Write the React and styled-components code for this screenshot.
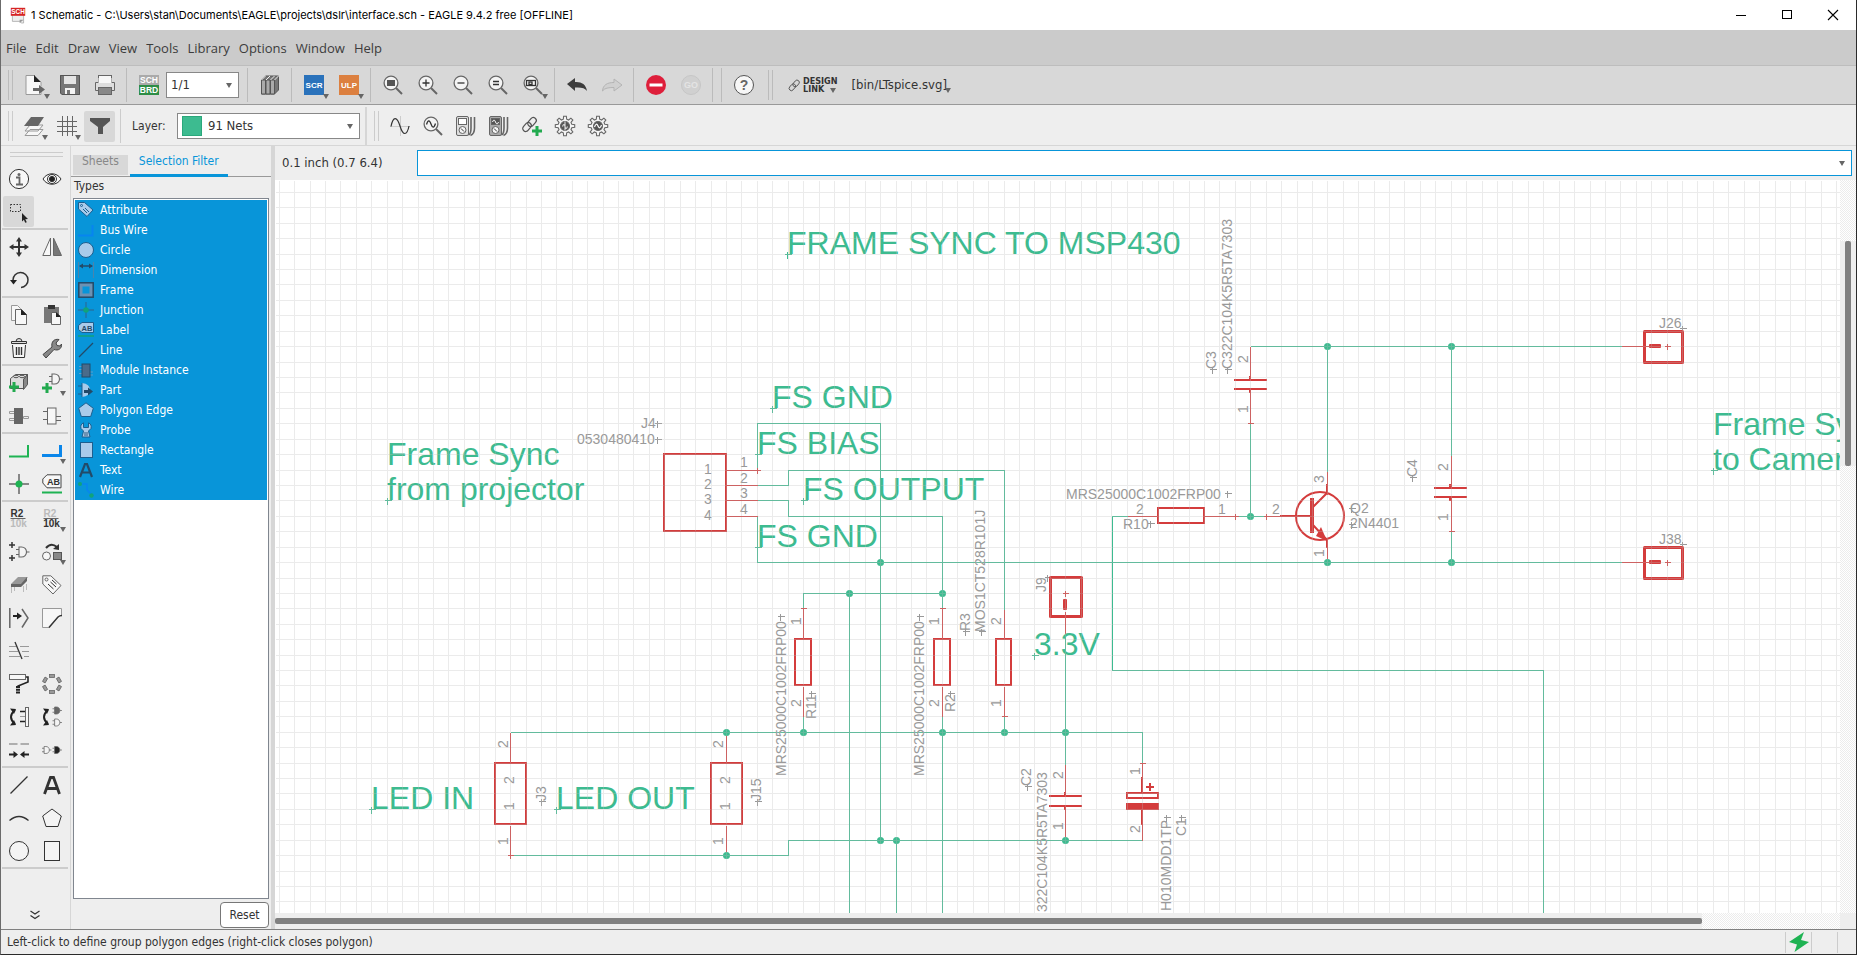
import React from 'react';
import styled, { createGlobalStyle, css } from 'styled-components';

const color = {
  accent: '#0895d9',
  net: '#3dbb90',
  symbol: '#d43c3c',
  label: '#999999',
  panel: '#eeeeee',
  bar: '#d8d8d8',
  line: '#d6d6d6',
  ink: '#333333',
};
const uiFont = '"DejaVu Sans Condensed", "DejaVu Sans", sans-serif';

const GlobalStyle = createGlobalStyle`
  *, *::before, *::after { box-sizing: border-box; }
  body { margin: 0; background: ${color.panel}; }
  button, input, select { font: inherit; color: inherit; margin: 0; }
`;

/* ---------- window frame ---------- */

const Window = styled.div`
  display: flex;
  flex-direction: column;
  min-height: 100vh;
  border: solid #2b2b2b;
  border-width: 0 1px 1px 1px;
  border-left-color: #6b6b6b;
  background: ${color.panel};
  color: ${color.ink};
  font: 12px/16px ${uiFont};
`;
const TitleBar = styled.header`
  display: flex;
  align-items: center;
  height: 30px;
  padding-left: 9px;
  background: #fff;
  color: #000;
`;
const Title = styled.h1`
  flex: 1;
  margin: 0 0 0 5px;
  font: 11px/16px Inter, sans-serif;
  white-space: nowrap;
`;
const WindowButton = styled.button`
  display: grid;
  place-items: center;
  width: 46px;
  height: 30px;
  padding: 0;
  border: 0;
  background: none;
`;
const MenuBar = styled.nav`
  display: flex;
  align-items: center;
  height: 36px;
  padding-left: 1px;
  border-bottom: 1px solid #bdbdbd;
  background: #cbcbcb;
`;
const MenuButton = styled.button`
  padding: 0 5px 0 4px;
  border: 0;
  background: none;
  color: #3c3c3c;
  font: 13px/20px "Open Sans", sans-serif;
`;

/* ---------- toolbars ---------- */

const Toolbar = styled.div`
  display: flex;
  align-items: center;
  ${(p) => p.$main
    ? css`height: 39px; background: ${color.bar}; border-bottom: 1px solid #999;`
    : css`height: 41px; background: ${color.panel}; border-bottom: 1px solid ${color.line}; padding-top: 2px;`}
`;
const Handle = styled.span`
  width: 5px;
  height: 30px;
  margin: 0 4px 0 7px;
  border: solid ${(p) => (p.$main ? '#bbb' : '#ccc')};
  border-width: 0 1px;
`;
const Divider = styled.span`
  width: 1px;
  height: 34px;
  margin: 0 4px;
  background: ${(p) => (p.$light ? '#ccc' : '#bbb')};
`;
const Gap = styled.span`
  width: 2px;
  align-self: stretch;
  margin-left: 5px;
  background: ${color.line};
`;
const ToolButton = styled.button`
  position: relative;
  display: grid;
  place-items: center;
  width: ${(p) => p.$width || 33}px;
  height: 33px;
  padding: 0;
  border: 0;
  background: none;
  &::before {
    content: '';
    position: absolute;
    inset: 1px;
    border-radius: 2px;
    background: ${(p) => (p.$active ? color.bar : 'transparent')};
  }
`;
const TextTool = styled.button`
  position: relative;
  display: flex;
  align-items: center;
  gap: 3px;
  height: 34px;
  margin-left: ${(p) => (p.$small ? 11 : 14)}px;
  padding: 0;
  border: 0;
  background: none;
  font-size: ${(p) => (p.$small ? '9px' : '13px')};
  font-weight: ${(p) => (p.$small ? 700 : 400)};
  line-height: ${(p) => (p.$small ? '8px' : '16px')};
  text-align: left;
`;
const Caret = styled.span`
  position: absolute;
  right: ${(p) => (p.$edge ? -4 : 2)}px;
  bottom: ${(p) => p.$drop || 3}px;
  border: solid transparent;
  border-width: 5px 3px 0;
  border-top-color: #666;
`;
const Combo = styled.span`
  position: relative;
  display: flex;
  align-items: center;
  width: ${(p) => p.$width}px;
  height: 26px;
  padding-left: 4px;
  border: 1px solid #888;
  background: #fff;
  font-size: 13px;
`;
const SheetCombo = styled(Combo)`
  margin-right: 4px;
`;
const ComboSelect = styled.select`
  flex: 1;
  align-self: stretch;
  min-width: 0;
  padding: 0;
  border: 0;
  outline: 0;
  appearance: none;
  background: transparent;
`;
const ComboArrow = styled.span`
  position: absolute;
  right: 6px;
  top: 10px;
  border: solid transparent;
  border-width: 5px 3px 0;
  border-top-color: #666;
  pointer-events: none;
`;
const Swatch = styled.span`
  width: 20px;
  height: 20px;
  margin-right: 6px;
  border: 1px solid #2aa87b;
  background: ${color.net};
`;
const LayerLabel = styled.label`
  width: 45px;
  margin-left: 7px;
`;

/* ---------- body ---------- */

const Body = styled.div`
  display: flex;
  flex: 1;
`;
const Palette = styled.aside`
  display: flex;
  flex-direction: column;
  align-items: stretch;
  width: 70px;
  padding: 6px 2px 0 1px;
  border-right: 1px solid ${color.line};
`;
const PaletteHandle = styled.span`
  height: 5px;
  margin: 0 5px 5px 8px;
  border: solid #ccc;
  border-width: 1px 0;
`;
const PaletteGroup = styled.div`
  display: grid;
  grid-template-columns: 33px 33px;
  border-bottom: 2px solid #ccc;
`;
const MoreButton = styled.button`
  display: grid;
  place-items: center;
  height: 28px;
  margin-top: auto;
  padding: 0;
  border: 0;
  background: none;
`;
const Dock = styled.section`
  display: flex;
  flex-direction: column;
  width: 200px;
  padding: 9px 0 1px;
`;
const Tabs = styled.div`
  display: flex;
  gap: 2px;
  height: 22px;
  padding-left: 2px;
  border-bottom: 1px solid #999;
`;
const Tab = styled.button`
  height: ${(p) => (p.$active ? 22 : 20)}px;
  padding: 0 9px 8px;
  border: 0;
  background: ${(p) => (p.$active ? 'none' : color.bar)};
  border-bottom: ${(p) => (p.$active ? `3px solid ${color.accent}` : '0')};
  color: ${(p) => (p.$active ? color.accent : '#888')};
  line-height: 12px;
  white-space: nowrap;
`;
const DockTitle = styled.h2`
  margin: 1px 0 4px 3px;
  font: inherit;
`;
const TypeList = styled.ul`
  flex: 1;
  margin: 0 2px 3px;
  padding: 1px;
  border: 1px solid #80868f;
  background: #fff;
  list-style: none;
`;
const TypeItem = styled.li`
  display: flex;
  align-items: center;
  gap: 6px;
  height: 20px;
  padding-left: 3px;
  background: ${color.accent};
  color: #fff;
`;
const ResetButton = styled.button`
  align-self: flex-end;
  width: 49px;
  height: 26px;
  margin-right: 2px;
  padding: 0;
  border: 1px solid #777;
  border-radius: 4px;
  background: #fff;
`;
const Splitter = styled.div`
  width: 4px;
  background: ${color.line};
`;
const Editor = styled.main`
  display: flex;
  flex: 1;
  flex-direction: column;
  min-width: 0;
`;
const CommandRow = styled.div`
  display: flex;
  align-items: center;
  height: 34px;
  padding: 0 4px 0 7px;
`;
const Coordinates = styled.output`
  width: 135px;
  font-size: 13px;
`;
const CommandBox = styled.span`
  position: relative;
  display: flex;
  flex: 1;
  height: 26px;
  border: 1px solid ${color.accent};
  background: #fff;
`;
const CommandInput = styled.input`
  flex: 1;
  min-width: 0;
  padding: 0 16px 0 4px;
  border: 0;
  outline: 0;
  background: transparent;
`;
const CanvasArea = styled.div`
  display: grid;
  flex: 1;
  grid-template: 1fr 16px / 1fr 16px;
`;
const CanvasFrame = styled.div`
  position: relative;
  overflow: hidden;
  background: #fff;
`;
const Drawing = styled.svg`
  position: absolute;
  inset: 0;
  width: 100%;
  height: 100%;
  font-family: "Liberation Sans", Arial, sans-serif;
`;
const dither = 'repeating-conic-gradient(#fff 0 25%, #ececec 0 50%) 0 0 / 2px 2px';
const ScrollTrack = styled.div`
  display: flex;
  flex-direction: ${(p) => (p.$vertical ? 'column' : 'row')};
  background: ${dither};
`;
const ScrollSpace = styled.span`
  flex: ${(p) => p.$share} 0 0;
`;
const ScrollThumb = styled.span`
  flex: ${(p) => p.$share} 0 0;
  padding: ${(p) => (p.$vertical ? '0 5px' : '5px 0')};
  background: ${color.panel};
  &::before {
    content: '';
    display: block;
    height: 100%;
    border-radius: 2px;
    background: #808080;
  }
`;
const StatusBar = styled.footer`
  display: flex;
  align-items: center;
  height: 25px;
  padding-left: 6px;
  border-top: 1px solid #808080;
`;
const StatusText = styled.span`
  flex: 1;
`;
const StatusCell = styled.span`
  display: grid;
  place-items: center;
  width: ${(p) => p.$width}px;
  height: 21px;
  border-left: 1px solid #ccc;
`;

/* ---------- icons ---------- */

const IconSvg = styled.svg`
  position: relative;
  display: block;
  flex: none;
  overflow: visible;
  font-family: "Liberation Sans", Arial, sans-serif;
  font-weight: 700;
`;
const D = '#333';
const M = '#666';
const G = '#999';

const gear = (() => {
  const pts = [];
  for (let i = 0; i < 8; i += 1) {
    [[-14, 7], [-8, 9.8], [8, 9.8], [14, 7]].forEach(([a, r]) => {
      const t = ((i * 45 + a) * Math.PI) / 180;
      pts.push(`${(10 + r * Math.cos(t)).toFixed(2)},${(10 + r * Math.sin(t)).toFixed(2)}`);
    });
  }
  return pts.join(' ');
})();

const Lens = ({ children }) => (
  <g fill="none" stroke={M} strokeWidth="1.3">
    <circle cx="8" cy="8" r="6.9" fill="#f4f4f4" />
    <path d="M13 13l6 6" strokeWidth="2" />
    <g stroke={D}>{children}</g>
  </g>
);
const Plus = ({ x, y, c = '#22aa4f', s = 5, w = 3 }) => (
  <path d={`M${x - s} ${y}h${2 * s}M${x} ${y - s}v${2 * s}`} stroke={c} strokeWidth={w} fill="none" />
);
const Chain = () => (
  <g fill="none" stroke="#555" strokeWidth="1.2">
    <rect x="5" y="3" width="10" height="6" rx="3" transform="rotate(-50 10 6)" />
    <rect x="0" y="8" width="10" height="6" rx="3" transform="rotate(-50 5 11)" />
  </g>
);
const Gate = ({ x = 0, y = 0, fill = '#f4f4f4' }) => (
  <g transform={`translate(${x} ${y})`} stroke={M} strokeWidth="1.1" fill={fill}>
    <path d="M3 0h2.500c3 0 5 2 5 5s-2 5-5 5h-2.500zM0 2.500h3M0 7.500h3M10.500 5h3" />
  </g>
);
const Meter = ({ dark }) => (
  <g stroke={M} fill="#f4f4f4">
    <rect x="0.500" y="0.500" width="12" height="19" rx="1.500" fill={dark ? '#aaa' : '#ddd'} />
    <rect x="2.500" y="2.500" width="8" height="6" fill={dark ? '#555' : '#fff'} />
    {dark && <path d="M3.500 6q1.500-4 3 0t3 0" fill="none" stroke="#fff" />}
    <circle cx="6.500" cy="14" r="3.500" />
    <path d="M5 12.500l3 3" stroke={D} />
    <path d="M15 1v11q0 6-2.500 7M18.500 1v11q0 6-4 7.500" fill="none" strokeWidth="1.600" />
  </g>
);
const GearIcon = ({ dark }) => (
  <g fill="#f4f4f4" stroke={M} strokeWidth="1.100">
    <polygon points={gear} />
    <circle cx="10" cy="10" r="4.500" fill="#555" />
    {dark
      ? <path d="M6.500 11q1.800-5 3.500-1t3.500-1" fill="none" stroke="#fff" strokeWidth="1.200" />
      : <path d="M10 5.500v9M7.500 10.500q1.500-4 2.500 0t2.500 0" fill="none" stroke="#ddd" strokeWidth="1.100" />}
  </g>
);
const Tile = ({ text, fill }) => (
  <g>
    <rect width="20" height="20" fill={fill} />
    <text x="10" y="13" textAnchor="middle" fontSize="8" fill="#fff">{text}</text>
  </g>
);
const NamePair = ({ top, bottom }) => (
  <g fontSize="10" textAnchor="middle">
    <text x="8" y="8" fill={top}>R2</text>
    <path d="M1.500 9.500h15" stroke={M} />
    <text x="9.500" y="18" fill={bottom}>10k</text>
  </g>
);

const glyphs = {
  doc: <g><path d="M1 .5h9l6 6v13H1z" fill="#f7f7f7" /><path d="M1 19.500V.5h9" fill="none" stroke={G} /><path d="M9 0l7 7H9z" fill="#222" /><path d="M1 19.500h15V17M16 7v4" fill="none" stroke={G} /><path d="M8 14.500h7" stroke={M} strokeWidth="3" /><path d="M14 10l6 4.500-6 4.500z" fill={M} /></g>,
  save: <g><path d="M0 0h20v20H2l-2-2z" fill="#777" /><path d="M4 0h12v9H4z" fill="#e4e4e4" /><path d="M5 13h10v7H5z" fill="#f4f4f4" /><path d="M7 15h3v5H7z" fill="#777" /><path d="M.5.5h19v19H2l-1.500-1.500z" fill="none" stroke="#555" /></g>,
  print: <g stroke={M}><rect x="3.500" y=".5" width="13" height="8" fill="#f7f7f7" /><path d="M.5 7.500h19v8H.5z" fill="#ddd" /><path d="M3.500 3v5h13V3" fill="#f7f7f7" stroke="none" /><rect x="3.500" y="12.500" width="13" height="7" fill="#888" /></g>,
  schbrd: <g fontSize="8.500" textAnchor="middle" fill="#fff"><rect width="20" height="10" fill="#aaa" /><rect y="10" width="20" height="10" fill="#2d8d46" /><text x="10" y="8">SCH</text><text x="10" y="18">BRD</text></g>,
  books: <g stroke="#555" fill="#aaa"><path d="M1.500 5l4-4h13v14l-4 4h-13z" fill="#777" /><path d="M1.500 5h4v14h-4zM6 5h4v14H6zM10.500 5h4v14h-4z" /><path d="M1.500 5l4-4M6 5l4-4M10.500 5l4-4M14.500 5l4-4" stroke="#eee" /></g>,
  scr: <Tile text="SCR" fill="#2a72bb" />,
  ulp: <Tile text="ULP" fill="#dc8040" />,
  zfit: <Lens><rect x="4" y="5" width="8" height="6" fill="#555" stroke="none" /></Lens>,
  zin: <Lens><path d="M4.500 8h7M8 4.500v7" /></Lens>,
  zout: <Lens><path d="M4.500 8h7" /></Lens>,
  zeq: <Lens><path d="M5 6.500h6M5 9.500h6" /></Lens>,
  zsel: <Lens><rect x="3.500" y="5.500" width="9" height="5" /><rect x="6" y="7" width="3" height="2.500" /></Lens>,
  zsine: <Lens><path d="M3.500 8.500q2.300-7 4.500-.5t4.500-.5" /></Lens>,
  undo: <path d="M0 9l8-6v4c6-.5 11 2 12 9-2-3-6-4-12-3.500V16z" fill="#3c3c3c" />,
  redo: <path d="M20 10l-8-6v3.500C5 7.500 1 10 .5 16c2-3 6-3.500 11.500-3.500V16z" fill="#d0d0d0" stroke="#b4b4b4" />,
  stop: <g><circle cx="10" cy="10" r="10" fill="#de1f3b" /><rect x="3.500" y="8.500" width="13" height="3" fill="#fff" /></g>,
  go: <g><circle cx="10" cy="10" r="9.500" fill="#d0d0d0" stroke="#c6c6c6" /><text x="10" y="13" textAnchor="middle" fontSize="9" fill="#e4e4e4">GO</text></g>,
  help: <g><circle cx="10" cy="10" r="9.500" fill="#f7f7f7" stroke="#555" /><text x="10" y="15" textAnchor="middle" fontSize="14" fill={M}>?</text></g>,
  chain: <g transform="translate(1 0) scale(1.250)"><Chain /></g>,
  layers: <g><path d="M1 19.500l5-6h13l-5 6zM1 15l5-6h13l-5 6z" fill="#f7f7f7" stroke={G} /><path d="M0 10L7 1h13l-6 9z" fill={M} /></g>,
  grid: <path d="M5.500 0v20M10.500 0v20M15.500 0v20M0 5.500h20M0 10.500h20M0 15.500h20" stroke={M} fill="none" />,
  funnel: <path d="M0 2h20v3l-7 6v7H8v-7L0 5z" fill="#555" />,
  sine: <g fill="none"><path d="M0 10.500h20M10.500 0v20" stroke="#ccc" /><path d="M1 10.500C3 0 7 0 10 10s7 10 9 0" stroke={D} strokeWidth="1.200" /></g>,
  meter: <Meter />,
  meterDark: <Meter dark />,
  chainPlus: <g><Chain /><Plus x={15} y={15} /></g>,
  gear: <GearIcon />,
  gearDark: <GearIcon dark />,
  info: <g><circle cx="10" cy="10" r="9.600" fill="#f7f7f7" stroke={D} /><circle cx="10" cy="5.500" r="1.500" fill={M} /><path d="M7 8.500h3.500v7M7 15.500h7" fill="none" stroke={M} strokeWidth="1.800" /></g>,
  eye: <g fill="none" stroke={D}><path d="M1 10c4-7 14-7 18 0-4 7-14 7-18 0z" fill="#f7f7f7" /><circle cx="10" cy="10" r="4.500" /><circle cx="10" cy="10" r="2.600" fill="#222" /></g>,
  select: <g><rect x="1.500" y="2.500" width="10" height="7" fill="none" stroke={D} strokeDasharray="1.500 1.500" /><path d="M13 11l6 6-2.700.2 1.500 3-1.600.6-1.300-3L13 19.500z" fill="#222" /></g>,
  move: <g fill={D}><path d="M9 4h2v5h5v2h-5v5H9v-5H4V9h5z" /><path d="M10 0l3 4.500H7zM10 20l3-4.500H7zM0 10l4.500-3v6zM20 10l-4.500-3v6z" /></g>,
  mirror: <g stroke={M}><path d="M.8 18.500h7.700V1z" fill="#f7f7f7" /><path d="M11.500 1v17.500h8z" fill="#777" /></g>,
  rotate: <g><path d="M4 10a7.500 7.500 0 1 1 8 7.500" fill="none" stroke={D} strokeWidth="1.500" /><path d="M1 10h7l-3.500 4.500z" fill="#222" /></g>,
  copy: <g stroke={M} fill="#f7f7f7"><path d="M2.500.5h6l3 3v12h-9z" stroke={G} /><path d="M6.500 4.500h6l5 5v10h-11z" /><path d="M12 4v6h6z" fill="#222" stroke="none" /></g>,
  paste: <g><path d="M2 2h15v16H2z" fill="#777" /><rect x="6" y="0" width="7" height="4" fill={D} /><path d="M9.500 7.500h5l4 4v8h-9z" fill="#f7f7f7" stroke={M} /><path d="M14 7v5h5z" fill="#222" /></g>,
  trash: <g fill="none" stroke={D}><path d="M2.500 3.500h15v2h-15zM7 3.500q0-3 3-3t3 3" fill="#ddd" /><path d="M3.500 7l1 12.500h11l1-12.500" fill="#f7f7f7" /><path d="M7.500 9v8M10 9v8M12.500 9v8" strokeWidth="1.400" /></g>,
  wrench: <path d="M1 16.500L10 9C9 4 12 .5 17 1.500L14 5l1 2.500 3 .5 1.500-2C20 11 16 13 12 11.500L4 20z" fill="#888" stroke="#444" />,
  addModule: <g stroke="#555" fill="#ddd"><path d="M1.500 5.500l5-4h12l-4 5v9h-13z" /><path d="M14.500 6.500l4-5v10l-4 5z" fill="#888" /><ellipse cx="7" cy="3.500" rx="2.500" ry="1.200" /><ellipse cx="13" cy="3.500" rx="2.500" ry="1.200" /><Plus x={5} y={14} /></g>,
  addPart: <g><Gate x={7} y={1} /><Plus x={5} y={15} /></g>,
  chipDark: <g fill="#eee" stroke={G}><path d="M.5 5.500h5v2h-5zM.5 12.500h5v2h-5zM14.500 10.500h5v2h-5z" /><rect x="5" y="2" width="9" height="16" fill={M} stroke="none" /></g>,
  chip: <g fill="#f7f7f7" stroke={M}><path d="M1 5.500h5M1 13.500h5M14 14.500h5M14 10.500h5" /><rect x="5.500" y="2" width="8.500" height="16" /></g>,
  net: <path d="M0 15.500h19V4" fill="none" stroke="#1eb353" strokeWidth="2" />,
  bus: <path d="M0 14.500h18.500V4" fill="none" stroke="#0a86ea" strokeWidth="3" />,
  junction: <g><path d="M0 10h20M10 0v20" stroke={M} strokeWidth="1.500" /><circle cx="10" cy="10" r="3.500" fill="#1eb353" /></g>,
  label: <g><path d="M5 .8h14v13H5L.8 9V5z" fill="#f7f7f7" stroke="#444" /><text x="11.500" y="11" fontSize="9" textAnchor="middle" fill={D}>AB</text><path d="M0 18.500h20" stroke="#1eb353" strokeWidth="2" /></g>,
  name: <NamePair top={D} bottom="#bbb" />,
  value: <NamePair top="#bbb" bottom={D} />,
  invoke: <g><Gate x={7} y={5} /><Plus x={3} y={3} c={D} s={3} w={1.5} /><Plus x={3} y={16} c={D} s={3} w={1.5} /></g>,
  replace: <g><path d="M4 6q5-6 11-1" fill="none" stroke={D} strokeWidth="2" /><path d="M17 2v6l-6-1z" fill={D} /><circle cx="4.500" cy="14" r="4" fill="#f7f7f7" stroke={M} /><rect x="11.500" y="10.500" width="8" height="7" fill="#888" stroke="#555" /></g>,
  gateswap: <g><path d="M2.500 12v6M5.500 12v4M14.500 11v6M17.500 9v6" stroke="#bbb" fill="none" /><path d="M9 2h10l-6 7H2z" fill="#999" /><path d="M2 9h10l6-7v4l-6 6H2z" fill={M} /></g>,
  tag: <g stroke={M} fill="#f7f7f7"><path d="M.8.8h8L19 10.500 11 19 .8 9z" /><circle cx="4.500" cy="4.500" r="1.500" /><path d="M6 9l5.500 5M8.500 7l5.500 5M10 5l4.500 4" fill="none" stroke={D} /></g>,
  miter: <g fill="none"><path d="M.8 0v20M13 1l6 9-6 9.500" stroke={M} strokeWidth="1.500" /><path d="M4 8h5" stroke="#222" strokeWidth="2" /><path d="M8 4.500l5 3.500-5 3.500z" fill="#222" /></g>,
  split: <g fill="none"><path d="M19.500 8V.5H.5v19h7" stroke={G} fill="#f7f7f7" /><path d="M7 19.500L16 9q1.500-1.500 4-1.500" stroke={D} strokeWidth="1.500" /></g>,
  slice: <g fill="none"><path d="M0 5.500h8M11 5.500h9M0 10.500h9M13 10.500h7M0 15.500h11M15 15.500h5" stroke={G} /><path d="M6 1l7 17" stroke={D} strokeWidth="1.300" /></g>,
  paint: <g fill="none"><rect x=".5" y=".5" width="16" height="5" fill="#f7f7f7" stroke={M} /><path d="M17 3h2v5L9 12v2" stroke="#222" strokeWidth="1.600" /><path d="M9 12v8" stroke="#222" strokeWidth="4" strokeDasharray="2 .7" /></g>,
  ring: <g fill="#999" stroke={M} strokeWidth=".8">{[0, 60, 120, 180, 240, 300].map((a) => <rect key={a} x="7.500" y="0.500" width="5" height="3" transform={`rotate(${a} 10 10)`} />)}</g>,
  pinswap: <g><path d="M6 3Q-2 10 6 17" fill="none" stroke="#222" strokeWidth="2" /><path d="M1 1.500l6 .5-2 5zM1 18.500l6-.5-2-5z" fill="#222" /><path d="M11 4.500h6M11 14.500h6" stroke="#222" strokeWidth="1.500" /><path d="M11 9.500h6" stroke={G} /><rect x="16.500" y=".5" width="3" height="19" fill="#f7f7f7" stroke={M} /></g>,
  gates: <g><path d="M6 3Q-2 10 6 17" fill="none" stroke="#222" strokeWidth="2" /><path d="M1 1.500l6 .5-2 5zM1 18.500l6-.5-2-5z" fill="#222" /><g transform="translate(10.500 0) scale(.7)"><Gate fill={M} /></g><g transform="translate(10.500 12) scale(.7)"><Gate /></g></g>,
  optimize: <g><path d="M0 4h8.500M11.500 4H20" stroke={G} strokeWidth="1.500" /><path d="M0 14.500h5M20 14.500h-5" stroke="#222" strokeWidth="1.800" /><path d="M4.500 11l4.500 3.500L4.500 18zM15.500 11L11 14.500l4.500 3.500z" fill="#222" /></g>,
  pair: <g><g transform="translate(0 6.500) scale(.7)"><Gate /></g><g transform="translate(10.500 6.500) scale(.7)"><Gate fill="#222" /></g></g>,
  line: <path d="M1.500 18.500l17-17" stroke={D} strokeWidth="1.300" />,
  letter: <path d="M2.500 19L8.500 2.500h3L17.500 19M5 13.500h10" fill="none" stroke={D} strokeWidth="2.800" />,
  arc: <path d="M.5 12.500q9.500-8 19 0" fill="none" stroke={D} strokeWidth="1.300" />,
  pentagon: <path d="M10 1l9.300 7L16 18.500H4L.7 8z" fill="#f4f4f4" stroke={D} />,
  circle: <circle cx="10" cy="10" r="9.500" fill="#f4f4f4" stroke={D} />,
  rect: <rect x="2.500" y=".5" width="15" height="19" fill="#f4f4f4" stroke={D} />,
  more: <path d="M5.500 6l4.500 3 4.500-3M5.500 10.500l4.500 3 4.500-3" fill="none" stroke={D} strokeWidth="1.300" />,
  bolt: <path d="M15 0L0 10l8 2.500L5.500 20 20 10l-8-2z" fill="#1eb353" />,
  min: <path d="M5 10.500h10" stroke="#000" />,
  max: <rect x="5.500" y="5.500" width="9" height="8" fill="none" stroke="#000" />,
  close: <path d="M5 5l10 10M15 5L5 15" stroke="#000" strokeWidth="1.100" />,
  app: <g><path d="M3 8h14v12h-3l-2-2H3z" fill="#eee" stroke="#aaa" /><path d="M12 20v-4h5z" fill="#999" /><rect x="1" y="1" width="18" height="10" fill="#d62424" /><text x="10" y="9" fontSize="8" textAnchor="middle" fill="#fff">SCH</text></g>,
};

const tint = '#a9cbea';
const edge = '#1d5f8f';
const navy = '#234a68';
const typeGlyphs = {
  Attribute: <g stroke={edge} fill={tint}><path d="M.5 .5h6L15 8l-6 6.500L.5 7z" /><circle cx="3.500" cy="3.500" r="1" /><path d="M5 7l4 4M7 6l4 4" /></g>,
  'Bus Wire': <path d="M0 13.500h14.500V3" fill="none" stroke="#0785f0" strokeWidth="2" />,
  Circle: <circle cx="8" cy="8" r="7.500" fill={tint} stroke={edge} />,
  Dimension: <g><path d="M.5 0v16M15.500 0v16" stroke="#4a84ad" /><path d="M2 4h12" stroke={navy} strokeWidth="1.500" /><path d="M1 4l4-2.500v5zM15 4l-4-2.500v5z" fill={navy} /></g>,
  Frame: <g><rect x=".8" y=".8" width="14.400" height="14.400" fill="#6d92b3" stroke={navy} strokeWidth="1.500" /><rect x="4.500" y="4.500" width="7" height="7" fill={color.accent} /></g>,
  Junction: <g><path d="M0 8h16M8 0v16" stroke="#2274a5" strokeWidth="1.500" /><circle cx="8" cy="8" r="2.800" fill="#11a37a" /></g>,
  Label: <g><path d="M4 .5h11.500v10H4l-3.500-3v-4z" fill={tint} stroke={edge} /><text x="9" y="8.500" textAnchor="middle" fontSize="7.500" fill={navy}>AB</text><path d="M0 14h16" stroke="#11a37a" strokeWidth="1.500" /></g>,
  Line: <path d="M1 15L15 1" stroke={navy} strokeWidth="1.200" />,
  'Module Instance': <g stroke="#5d9cc9" fill="none"><path d="M1 4.500h3M1 7.500h3M1 11.500h3M12 10h3M12 13h3" /><rect x="4" y="2" width="8" height="13" fill="#4a6b8a" stroke={navy} /></g>,
  Part: <g><path d="M4 1q8 1 8 7t-8 7z" fill={tint} /><path d="M0 4h4M0 12h4M4 1v14" stroke={edge} fill="none" /><path d="M6 8h4V5.500l5 4-5 4V11H6z" fill={navy} /></g>,
  'Polygon Edge': <path d="M8 .8l7.300 5.500L12.700 14.500H3.300L.7 6.300z" fill={tint} stroke={edge} />,
  Probe: <g><path d="M5.500.8Q2 2.500 3 6.500l2.500 2.500L4 15h8l-1.500-6L13 6.500q1-4-2.500-5.700v4.700h-5z" fill={tint} stroke={edge} /><path d="M6 10h4v5H6z" fill="#6d92b3" /></g>,
  Rectangle: <rect x="2.500" y=".5" width="12" height="15" fill={tint} stroke={edge} />,
  Text: <path d="M2 15L7 2h2l5 13M4.500 10.500h7" fill="none" stroke={navy} strokeWidth="2.200" />,
  Wire: <g><path d="M2 2h7v6l5 5" fill="none" stroke="#0785f0" strokeWidth="1.500" /><circle cx="2" cy="2" r="2" fill="#11a37a" /><circle cx="13.500" cy="13.500" r="2.200" fill="#11a37a" /></g>,
};

const Icon = ({ name, size = 20 }) => (
  <IconSvg width={size} height={size} viewBox="0 0 20 20" aria-hidden="true">{glyphs[name]}</IconSvg>
);

/* ---------- schematic ---------- */

const OX = 275;
const OY = 180;
const PITCH = 15.427;

const wires = [
  'M757 470V423H880V840', 'M757 485H788V470H1004V609', 'M757 500H788V516H942V608',
  'M757 516V562H1621', 'M803 608V593H942', 'M849 593V920', 'M803 716V732', 'M942 716V920',
  'M1004 716V732', 'M510 732H1142V763', 'M510 855H788V840H1142', 'M896 840V920', 'M1065 634V764',
  'M1127 516H1112V670H1543V920', 'M1250 346H1621', 'M1250 423V516', 'M1235 516H1266',
  'M1327 346V471', 'M1451 346V455', 'M1451 531V562',
];
const pins = [
  'M726 470H757', 'M726 485H757', 'M726 500H757', 'M726 516H757',
  'M803 608V638M803 686V716', 'M942 608V638M942 686V716', 'M1004 609V638M1004 686V716',
  'M510 732V762M510 825V855', 'M726 732V762M726 825V855', 'M1065 611V634', 'M1065 764V796M1065 806V840',
  'M1142 763V792M1142 810V840', 'M1127 516H1157M1204 516H1235', 'M1266 516H1281',
  'M1250 346V380M1250 389V423', 'M1451 455V488M1451 497V531', 'M1327 471V494M1327 541V562',
  'M1621 346H1650', 'M1621 562H1650',
  'M1232 516h6M1235 513v6M1263 516h6M1266 513v6M1247 423h6M1448 531h6M800 608h6M939 608h6M1001 716h6M1139 763h6',
  'M754 470h6M757 467v6M507 855h6M510 852v6M1664 346h6M1667 343v6M1664 562h6M1667 559v6M1062 593h6M1065 590v6',
];
const junctions = [
  [880, 562], [849, 593], [942, 593], [726, 732], [803, 732], [942, 732], [1004, 732], [1065, 732],
  [726, 855], [880, 840], [896, 840], [1065, 840], [1327, 346], [1451, 346], [1250, 516], [1327, 562], [1451, 562],
];
const boxes = [
  [664, 454, 62, 77], [1158, 508, 46, 15], [795, 639, 16, 46], [934, 639, 16, 46], [996, 639, 15, 46],
  [495, 763, 31, 61], [711, 763, 31, 61], [1127, 793, 31, 5],
];
const connectors = [[1644.5, 331.5, 38, 31], [1644.5, 547.5, 38, 31], [1050.5, 577.5, 31, 39]];
const notes = [
  [787, 254, 'FRAME SYNC TO MSP430'], [772, 408, 'FS GND'], [757, 454, 'FS BIAS'], [803, 500, 'FS OUTPUT'],
  [757, 547, 'FS GND'], [387, 465, 'Frame Sync', true], [387, 500, 'from projector'], [371, 809, 'LED IN'],
  [556, 809, 'LED OUT'], [1034, 655, '3.3V'], [1713, 435, 'Frame Sync', true], [1713, 470, 'to Camera'],
];
const flatLabels = [
  [641, 428, 'J4'], [577, 444, '0530480410'], [704, 474, '1'], [704, 489, '2'], [704, 504, '3'], [704, 520, '4'],
  [740, 467, '1'], [740, 483, '2'], [740, 498, '3'], [740, 514, '4'], [1066, 499, 'MRS25000C1002FRP00'],
  [1123, 529, 'R10'], [1136, 514, '2'], [1218, 514, '1'], [1272, 514, '2'], [1350, 513, 'Q2'], [1350, 528, '2N4401'],
  [1659, 328, 'J26'], [1659, 544, 'J38'],
];
const turnedLabels = [
  [1216, 369, 'C3'], [1232, 369, 'C322C104K5R5TA7303'], [1248, 363, '2'], [1248, 413, '1'], [1324, 483, '3'],
  [1324, 557, '1'], [1417, 477, 'C4'], [1448, 471, '2'], [1448, 521, '1'], [985, 632, 'MOS1CT528R101J'],
  [970, 631, 'R3'], [801, 625, '1'], [801, 707, '2'], [939, 625, '1'], [939, 707, '2'], [1001, 625, '2'],
  [1001, 707, '1'], [786, 776, 'MRS25000C1002FRP00'], [924, 776, 'MRS25000C1002FRP00'], [816, 719, 'R11'],
  [955, 712, 'R2'], [508, 748, '2'], [514, 784, '2'], [514, 810, '1'], [508, 845, '1'], [546, 801, 'J3'],
  [723, 748, '2'], [730, 784, '2'], [730, 810, '1'], [723, 845, '1'], [761, 801, 'J15'], [1063, 779, '2'],
  [1063, 830, '1'], [1031, 786, 'C2'], [1047, 912, '322C104K5R5TA7303'], [1140, 775, '1'], [1140, 833, '2'],
  [1186, 836, 'C1'], [1171, 911, 'H010MDD1TP'], [1046, 592, 'J9'],
];
const origins = [
  [657, 423], [657, 439], [1212, 369], [1227, 369], [1227, 493], [1150, 523], [1351, 508], [1351, 524], [1412, 477],
  [981, 631], [965, 631], [780, 616], [919, 616], [811, 693], [950, 693], [541, 801], [757, 801], [1027, 786],
  [1181, 817], [1166, 817], [1682, 328], [1682, 544], [1047, 577],
];
const cross = (x, y) => `M${x - 3} ${y}h7M${x} ${y - 3}v7`;
const gridPath = [
  ...Array.from({ length: 180 }, (_, i) => `M${Math.floor(279.3 + 15.42 * i)} ${OY}v2000`),
  ...Array.from({ length: 130 }, (_, i) => `M${OX} ${Math.floor(192.33 + PITCH * i)}h3000`),
].join('');

const Schematic = () => (
  <Drawing role="img" aria-label="Schematic sheet">
    <g transform={`translate(${-OX} ${-OY})`}>
      <g transform="translate(.5 .5)" fill="none" shapeRendering="crispEdges">
        <path d={wires.join('')} stroke={color.net} />
        <path d={pins.join('')} stroke={color.symbol} />
      </g>
      <g fontSize="14" fill={color.label}>
        {flatLabels.map(([x, y, t]) => <text key={`${x},${y}`} x={x} y={y}>{t}</text>)}
        {turnedLabels.map(([x, y, t]) => (
          <text key={`${x},${y}`} transform={`translate(${x} ${y}) rotate(-90)`}>{t}</text>
        ))}
      </g>
      <path d={origins.map(([x, y]) => cross(x, y)).join('')} transform="translate(.5 .5)" stroke={color.label} fill="none" shapeRendering="crispEdges" />
      <g fontSize="32" fill={color.net}>
        {notes.map(([x, y, t]) => <text key={`${x},${y}`} x={x} y={y}>{t}</text>)}
      </g>
      <path d={notes.filter((n) => !n[3]).map(([x, y]) => cross(x, y)).join('')} transform="translate(.5 .5)" stroke={color.net} fill="none" shapeRendering="crispEdges" />
      <g fill="none" stroke={color.symbol} strokeWidth="2">
        {boxes.map(([x, y, w, h]) => <rect key={`${x},${y}`} x={x} y={y} width={w} height={h} />)}
        <path d="M1234 380h33M1234 389h33M1434 488h33M1434 497h33M1049 796h33M1049 806h33" />
        <path d="M1250 376v4M1250 389v4M1450 484v4M1450 497v4M1065 792v4M1065 806v4M1142 777v15M1142 809v16M1146 787h8M1150 783v8" />
        <circle cx="1320" cy="516" r="24" />
        <path d="M1280 516h32M1313 507l14-14v-9M1313 525l14 15v8" />
        <path d="M1312 498v35" strokeWidth="4" />
        {connectors.map(([x, y, w, h]) => <rect key={`${x},${y}`} x={x} y={y} width={w} height={h} strokeWidth="3" strokeLinejoin="round" />)}
      </g>
      <g fill={color.symbol}>
        <rect x="1126" y="803" width="33" height="7" />
        <rect x="1649" y="344" width="12" height="4" rx="1" />
        <rect x="1649" y="560" width="12" height="4" rx="1" />
        <rect x="1063" y="599" width="4" height="11" rx="1" />
        <path d="M1327 541l-11-5 5-9z" />
      </g>
      <g fill={color.net}>
        {junctions.map(([x, y]) => <circle key={`${x},${y}`} cx={x + 0.5} cy={y + 0.5} r="3.5" />)}
      </g>
      <path d={gridPath} transform="translate(.5 .5)" stroke="#bebebe" strokeOpacity=".3" fill="none" shapeRendering="crispEdges" />
    </g>
  </Drawing>
);

/* ---------- page ---------- */

const Tool = ({ icon, caret, width, active }) => (
  <ToolButton type="button" aria-label={icon} $width={width} $active={active}>
    <Icon name={icon} />
    {caret && <Caret />}
  </ToolButton>
);

const menus = ['File', 'Edit', 'Draw', 'View', 'Tools', 'Library', 'Options', 'Window', 'Help'];
const palette = [
  ['info', 'eye', 'select*', ''],
  ['move', 'mirror', 'rotate', ''],
  ['copy', 'paste', 'trash', 'wrench'],
  ['addModule', 'addPart+', 'chipDark', 'chip'],
  ['net', 'bus+', 'junction', 'label'],
  ['name', 'value+', 'invoke', 'replace+', 'gateswap', 'tag', 'miter', 'split', 'slice', '', 'paint', 'ring', 'pinswap', 'gates', 'optimize', 'pair'],
  ['line', 'letter', 'arc', 'pentagon', 'circle', 'rect'],
];

export default function App() {
  return (
    <Window>
      <GlobalStyle />
      <TitleBar>
        <Icon name="app" size={16} />
        <Title>1 Schematic - C:\Users\stan\Documents\EAGLE\projects\dslr\interface.sch - EAGLE 9.4.2 free [OFFLINE]</Title>
        <WindowButton type="button" aria-label="Minimize"><Icon name="min" /></WindowButton>
        <WindowButton type="button" aria-label="Maximize"><Icon name="max" /></WindowButton>
        <WindowButton type="button" aria-label="Close"><Icon name="close" /></WindowButton>
      </TitleBar>
      <MenuBar>
        {menus.map((m) => <MenuButton key={m} type="button">{m}</MenuButton>)}
      </MenuBar>

      <Toolbar $main>
        <Handle $main />
        <Tool icon="doc" width={35} caret />
        <Tool icon="save" width={35} />
        <Tool icon="print" width={35} />
        <Divider />
        <Tool icon="schbrd" width={35} />
        <SheetCombo $width={73}>
          <ComboSelect aria-label="Sheet" defaultValue="1"><option value="1">1/1</option></ComboSelect>
          <ComboArrow />
        </SheetCombo>
        <Divider />
        <Tool icon="books" width={35} />
        <Divider />
        <Tool icon="scr" width={35} caret />
        <Tool icon="ulp" width={35} caret />
        <Divider />
        <Tool icon="zfit" width={35} />
        <Tool icon="zin" width={35} />
        <Tool icon="zout" width={35} />
        <Tool icon="zeq" width={35} />
        <Tool icon="zsel" width={35} caret />
        <Divider />
        <Tool icon="undo" width={35} />
        <Tool icon="redo" width={35} />
        <Divider />
        <Tool icon="stop" width={35} />
        <Tool icon="go" width={35} />
        <Divider />
        <Divider />
        <Tool icon="help" width={35} />
        <Handle $main />
        <TextTool type="button" $small>
          <Icon name="chain" size={12} />
          <span>DESIGN<br />LINK</span>
          <Caret $drop={9} />
        </TextTool>
        <TextTool type="button">[bin/LTspice.svg]<Caret $edge $drop={9} /></TextTool>
      </Toolbar>

      <Toolbar>
        <Handle />
        <Tool icon="layers" caret />
        <Tool icon="grid" caret />
        <Tool icon="funnel" active />
        <Divider $light />
        <LayerLabel htmlFor="layer">Layer:</LayerLabel>
        <Combo $width={183}>
          <Swatch />
          <ComboSelect id="layer" defaultValue="91"><option value="91">91 Nets</option></ComboSelect>
          <ComboArrow />
        </Combo>
        <Gap />
        <Handle />
        {['sine', 'zsine', 'meter', 'meterDark', 'chainPlus', 'gear', 'gearDark'].map((n) => <Tool key={n} icon={n} />)}
      </Toolbar>

      <Body>
        <Palette>
          <PaletteHandle />
          {palette.map((group) => (
            <PaletteGroup key={group[0]}>
              {group.map((entry, i) => (entry
                ? <Tool key={entry} icon={entry.replace(/[*+]/, '')} caret={entry.endsWith('+')} active={entry.endsWith('*')} />
                : <span key={`blank-${i}`} />))}
            </PaletteGroup>
          ))}
          <MoreButton type="button" aria-label="More tools"><Icon name="more" /></MoreButton>
        </Palette>

        <Dock>
          <Tabs role="tablist">
            <Tab type="button" role="tab" aria-selected="false">Sheets</Tab>
            <Tab type="button" role="tab" aria-selected="true" $active>Selection Filter</Tab>
          </Tabs>
          <DockTitle id="types">Types</DockTitle>
          <TypeList role="listbox" aria-labelledby="types" aria-multiselectable="true">
            {Object.entries(typeGlyphs).map(([name, glyph]) => (
              <TypeItem key={name} role="option" aria-selected="true">
                <IconSvg width="16" height="16" viewBox="0 0 16 16" aria-hidden="true">{glyph}</IconSvg>
                {name}
              </TypeItem>
            ))}
          </TypeList>
          <ResetButton type="button">Reset</ResetButton>
        </Dock>
        <Splitter />

        <Editor>
          <CommandRow>
            <Coordinates>0.1 inch (0.7 6.4)</Coordinates>
            <CommandBox>
              <CommandInput type="text" aria-label="Command line" />
              <ComboArrow />
            </CommandBox>
          </CommandRow>
          <CanvasArea>
            <CanvasFrame><Schematic /></CanvasFrame>
            <ScrollTrack $vertical>
              <ScrollSpace $share={61} />
              <ScrollThumb $vertical $share={225} />
              <ScrollSpace $share={447} />
            </ScrollTrack>
            <ScrollTrack>
              <ScrollThumb $share={1427} />
              <ScrollSpace $share={138} />
            </ScrollTrack>
          </CanvasArea>
        </Editor>
      </Body>

      <StatusBar>
        <StatusText>Left-click to define group polygon edges (right-click closes polygon)</StatusText>
        <StatusCell $width={26}><Icon name="bolt" /></StatusCell>
        <StatusCell $width={26} />
        <StatusCell $width={19} />
      </StatusBar>
    </Window>
  );
}
